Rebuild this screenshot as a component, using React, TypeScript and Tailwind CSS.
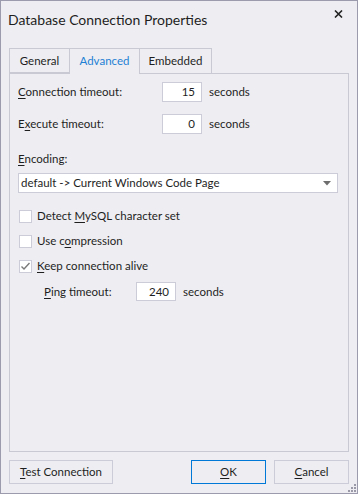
import React from "react";

const Mn = ({ children }: { children: React.ReactNode }) => (
  <span className="underline underline-offset-[2px] decoration-[1px]">{children}</span>
);

const NumBox = ({ value, w = "w-[40px]", h = "h-[20px]" }: { value: string; w?: string; h?: string }) => (
  <div
    className={`${w} ${h} bg-white border border-[#ccccd8] flex items-center justify-end pr-[6px]`}
  >
    {value}
  </div>
);

const Check = ({ checked, label }: { checked?: boolean; label: React.ReactNode }) => (
  <div className="flex items-center h-[16px] pl-[1px]">
    <div className="w-[13px] h-[13px] bg-white border border-[#ccccd8] flex items-center justify-center">
      {checked && (
        <svg width="11" height="11" viewBox="0 0 11 11">
          <path d="M1.5 5.5 L4 8 L9.5 2" fill="none" stroke="#7a7a7a" strokeWidth="1.4" />
        </svg>
      )}
    </div>
    <span className="ml-[5px]">{label}</span>
  </div>
);

export default function App() {
  return (
    <div
      className="w-[358px] h-[494px] bg-[#eeeef2] border border-[#9b9bad] flex flex-col text-[11.5px] text-[#1e1e1e] relative"
      style={{ fontFamily: 'Lato, "Noto Sans", sans-serif' }}
    >
      {/* title */}
      <div className="h-[47px] relative">
        <div className="pl-[7px] pt-[8px] text-[14px] leading-[22px]">Database Connection Properties</div>
        <svg className="absolute left-[333px] top-[9px]" width="9" height="8" viewBox="0 0 9 8">
          <path d="M1 0.5 L8 7.5 M8 0.5 L1 7.5" stroke="#222" strokeWidth="1.6" />
        </svg>
      </div>

      {/* tabs */}
      <div className="flex pl-[8px] h-[25px]">
        <div className="w-[60px] h-[25px] border border-[#c9c9d4] border-r-0 flex items-center justify-center">
          General
        </div>
        <div className="w-[71px] h-[26px] border border-[#c9c9d4] border-b-0 bg-[#eeeef2] flex items-center justify-center text-[#1e7fd4] relative z-10 pb-[1px]">
          Advanced
        </div>
        <div className="w-[72px] h-[25px] border border-[#c9c9d4] border-l-0 border-b-0 flex items-center justify-center">
          Embedded
        </div>
      </div>

      {/* panel */}
      <div className="ml-[8px] w-[340px] h-[379px] border border-[#c9c9d4] flex flex-col pl-[8px]">
        <div className="flex items-center mt-[8px] h-[20px]">
          <span className="w-[144px]">
            <Mn>C</Mn>onnection timeout:
          </span>
          <NumBox value="15" />
          <span className="ml-[7px]">seconds</span>
        </div>
        <div className="flex items-center mt-[12px] h-[20px]">
          <span className="w-[144px]">
            E<Mn>x</Mn>ecute timeout:
          </span>
          <NumBox value="0" />
          <span className="ml-[7px]">seconds</span>
        </div>
        <div className="mt-[17px] h-[16px] leading-[16px]">
          <Mn>E</Mn>ncoding:
        </div>
        <div className="mt-[6px] w-[320px] h-[20px] bg-white border border-[#ccccd8] flex items-center pl-[2px] pr-[6px]">
          <span className="flex-1">default -&gt; Current Windows Code Page</span>
          <svg width="8" height="5" viewBox="0 0 8 5">
            <path d="M0 0 H8 L4 4.5 Z" fill="#6e6e6e" />
          </svg>
        </div>
        <div className="mt-[15px] flex flex-col gap-[9px]">
          <Check
            label={
              <>
                Detect <Mn>M</Mn>ySQL character set
              </>
            }
          />
          <Check
            label={
              <>
                Use c<Mn>o</Mn>mpression
              </>
            }
          />
          <Check
            checked
            label={
              <>
                <Mn>K</Mn>eep connection alive
              </>
            }
          />
        </div>
        <div className="flex items-center mt-[8px] h-[19px] pl-[26px]">
          <span className="w-[92px]">
            <Mn>P</Mn>ing timeout:
          </span>
          <NumBox value="240" h="h-[19px]" />
          <span className="ml-[7px]">seconds</span>
        </div>
      </div>

      {/* buttons */}
      <div className="flex mt-[8px] pl-[8px]">
        <div className="w-[104px] h-[24px] border border-[#ccccd8] flex items-center justify-center">
          <span>
            <Mn>T</Mn>est Connection
          </span>
        </div>
        <div className="ml-[78px] w-[75px] h-[24px] border border-[#0078d7] flex items-center justify-center">
          <span>
            <Mn>O</Mn>K
          </span>
        </div>
        <div className="ml-[8px] w-[75px] h-[24px] border border-[#ccccd8] flex items-center justify-center">
          <span>
            <Mn>C</Mn>ancel
          </span>
        </div>
      </div>

      {/* grip */}
      <svg className="absolute right-[1px] bottom-[1px]" width="8" height="8" viewBox="0 0 8 8">
        {[
          [6, 0],
          [6, 3],
          [3, 3],
          [6, 6],
          [3, 6],
          [0, 6],
        ].map(([x, y], i) => (
          <rect key={i} x={x} y={y} width="2" height="2" fill="#9a9aa8" />
        ))}
      </svg>
    </div>
  );
}
